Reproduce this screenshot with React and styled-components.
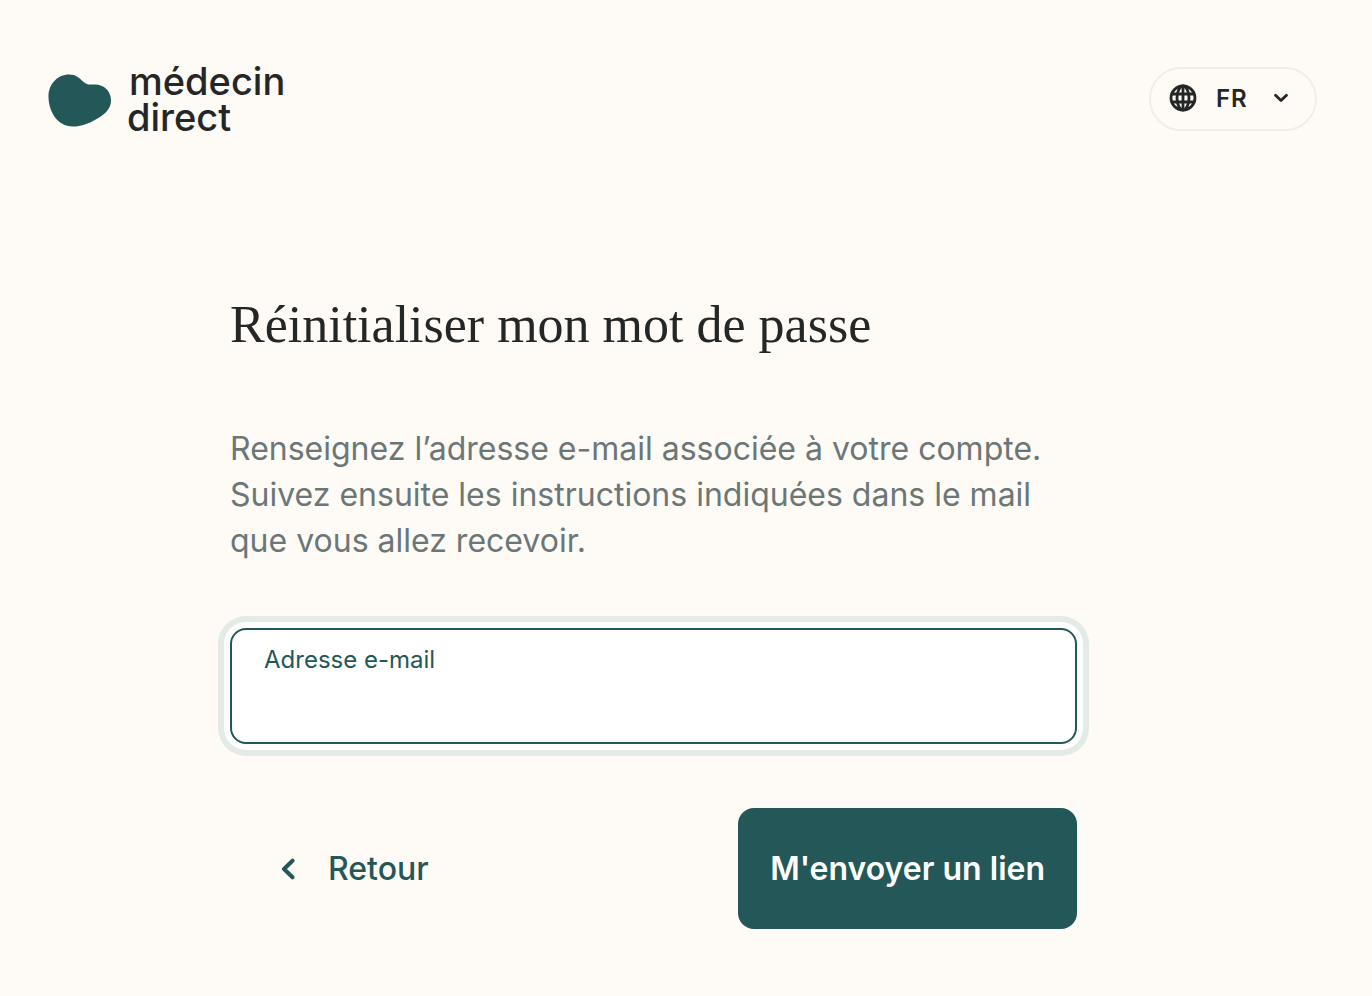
import React from "react";
import styled, { createGlobalStyle } from "styled-components";

const ink = "#252626";
const green = "#245757";

const GlobalStyle = createGlobalStyle`
  *, *::before, *::after { box-sizing: border-box; }
  body {
    margin: 0;
    background: #fefaf5;
    color: ${ink};
    font-family: Inter, "Liberation Sans", sans-serif;
  }
  button, input, select { font: inherit; color: inherit; }
`;

const Header = styled.header`
  display: flex;
  align-items: center;
  justify-content: space-between;
  padding: 59px 55px 0 48px;
`;

const HomeLink = styled.a`
  display: block;
  color: ${ink};
`;

const LogoDrawing = styled.svg`
  display: block;
  width: 240px;
  height: 80px;
`;

const LanguagePicker = styled.label`
  display: grid;
  grid-template-columns: 28px 1fr;
  align-items: center;
  width: 168px;
  height: 64px;
  padding: 0 0 2px 18px;
  border: 2px solid #f1eee9;
  border-radius: 32px;
  cursor: pointer;

  > * { grid-row: 1; }
`;

const GlobeDrawing = styled.svg`
  grid-column: 1;
  width: 28px;
  height: 28px;
`;

const LanguageSelect = styled.select`
  grid-column: 1 / -1;
  width: 100%;
  height: 56px;
  padding: 0 0 0 47px;
  border: 0;
  outline: 0;
  background: transparent;
  appearance: none;
  font-size: 24px;
  font-weight: 600;
  letter-spacing: 1px;
`;

const SelectArrow = styled.svg`
  grid-column: 2;
  justify-self: end;
  width: 16px;
  height: 10px;
  margin-right: 26px;
  pointer-events: none;
`;

const Main = styled.main`
  padding: 154px 65px 64px 0;
`;

const ResetForm = styled.form`
  width: 100%;
  max-width: 847px;
  margin: 0 auto;
`;

const Title = styled.h1`
  margin: 0 0 69px;
  font-family: "Liberation Serif", serif;
  font-size: 52px;
  font-weight: 400;
  line-height: 64px;
`;

const Intro = styled.p`
  margin: 0 0 64px;
  color: #6b7777;
  font-size: 32px;
  line-height: 46px;
`;

const Field = styled.div`
  display: flex;
  flex-direction: column;
  height: 116px;
  padding: 14px 32px 12px;
  border: 2px solid ${green};
  border-radius: 16px;
  background: #fff;
  box-shadow: 0 0 0 6px #fff, 0 0 0 12px #e4eae5;
`;

const FieldLabel = styled.label`
  color: ${green};
  font-size: 24px;
  line-height: 32px;
`;

const TextInput = styled.input`
  flex: 1;
  width: 100%;
  padding: 0;
  border: 0;
  outline: 0;
  background: transparent;
  font-size: 32px;
`;

const Actions = styled.div`
  display: flex;
  justify-content: space-between;
  margin-top: 64px;
`;

const Button = styled.button`
  display: flex;
  align-items: center;
  gap: 32px;
  height: 121px;
  padding: 0 ${({ $primary }) => ($primary ? 32 : 50)}px;
  border: 0;
  border-radius: 16px;
  background: ${({ $primary }) => ($primary ? green : "transparent")};
  color: ${({ $primary }) => ($primary ? "#fff" : green)};
  font-size: 32px;
  font-weight: ${({ $primary }) => ($primary ? 600 : 500)};
  white-space: nowrap;
  cursor: pointer;
`;

const BackArrow = styled.svg`
  width: 16px;
  height: 22px;
`;

function Logo() {
  return (
    <LogoDrawing viewBox="0 0 240 80" role="img" aria-label="médecin direct">
      <path
        d="M0.5 37.500C0.500 24.500 10 15.500 21 15.500C28 15.500 31.500 19 35 22.500C39 26.500 42 25.500 47 25.500C56 25.500 63 32 63 41.500C63 51 55 57 45 62C37 66 31.500 67.500 25 67.500C9 67.500 0.500 52 0.500 37.500Z"
        fill={green}
      />
      <g fill="currentColor" fontSize="38" fontWeight="500">
        <text x="81" y="36">médecin</text>
        <text x="79" y="72">direct</text>
      </g>
    </LogoDrawing>
  );
}

function Globe() {
  return (
    <GlobeDrawing viewBox="0 0 28 28" fill="none" stroke={ink} strokeWidth="2.800" aria-hidden="true">
      <circle cx="14" cy="14" r="12" />
      <ellipse cx="14" cy="14" rx="6" ry="12" />
      <path d="M14 2v24M3 10h22M3 18h22" />
    </GlobeDrawing>
  );
}

export default function App() {
  return (
    <>
      <GlobalStyle />
      <Header>
        <HomeLink href="#">
          <Logo />
        </HomeLink>
        <LanguagePicker>
          <Globe />
          <LanguageSelect aria-label="Langue" defaultValue="fr">
            <option value="fr">FR</option>
            <option value="en">EN</option>
          </LanguageSelect>
          <SelectArrow viewBox="0 0 16 10" fill="none" stroke={ink} strokeWidth="2.800" strokeLinecap="round" strokeLinejoin="round" aria-hidden="true">
            <path d="M2.500 2.200L8 7.600L13.500 2.200" />
          </SelectArrow>
        </LanguagePicker>
      </Header>
      <Main>
        <ResetForm onSubmit={(event) => event.preventDefault()}>
          <Title>Réinitialiser mon mot de passe</Title>
          <Intro>
            Renseignez l’adresse e-mail associée à votre compte. Suivez ensuite les
            instructions indiquées dans le mail que vous allez recevoir.
          </Intro>
          <Field>
            <FieldLabel htmlFor="email">Adresse e-mail</FieldLabel>
            <TextInput id="email" type="email" autoComplete="email" />
          </Field>
          <Actions>
            <Button type="button">
              <BackArrow viewBox="0 0 16 22" fill="none" stroke="currentColor" strokeWidth="4" strokeLinecap="round" strokeLinejoin="round" aria-hidden="true">
                <path d="M12.500 2.700L4 11L12.500 19.300" />
              </BackArrow>
              Retour
            </Button>
            <Button type="submit" $primary>M'envoyer un lien</Button>
          </Actions>
        </ResetForm>
      </Main>
    </>
  );
}
